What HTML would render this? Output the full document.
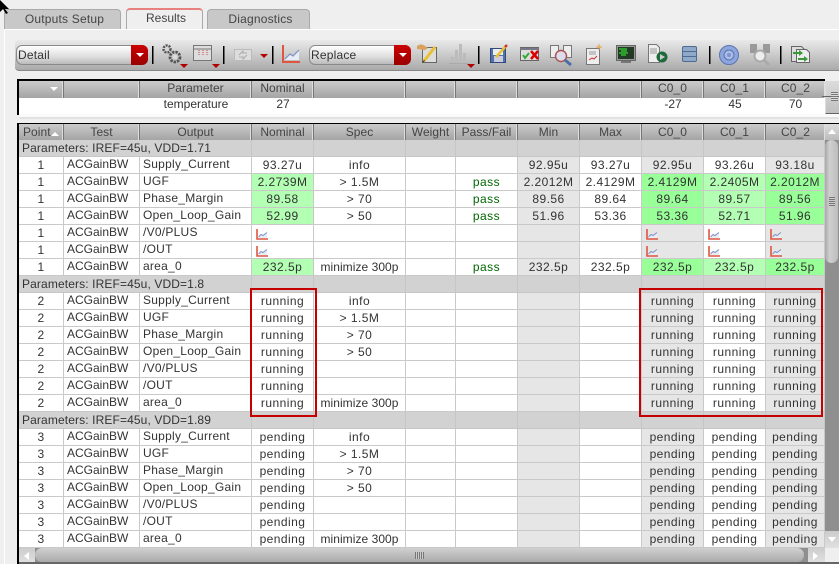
<!DOCTYPE html>
<html><head><meta charset="utf-8"><style>
html,body{margin:0;padding:0;width:839px;height:564px;overflow:hidden;background:#efefef;font-family:"Liberation Sans",sans-serif;font-size:12px;color:#333}
div{position:absolute;box-sizing:border-box}
.tab{top:9px;height:20px;background:#c8c8c8;border:1px solid #a9a9a9;border-bottom:0;border-radius:4px 4px 0 0;text-align:center;line-height:19px;letter-spacing:.2px;color:#444}
.combo{top:45px;height:20px;border:1px solid #8a8a8a;border-radius:6px;background:linear-gradient(#fff,#ddd 60%,#bbb);line-height:18px;padding-left:1px;letter-spacing:.2px}
.combo i{position:absolute;right:-1px;top:-1px;width:17px;height:20px;background:linear-gradient(#c00,#900);border-radius:0 6px 6px 0}
.combo i:after{content:"";position:absolute;left:5px;top:8px;border:4px solid transparent;border-top:4px solid #fff;border-bottom:0}
.hd{background:linear-gradient(#cbcbcb,#a4a4a4);height:17px;text-align:center;line-height:15px;letter-spacing:.05px;color:#444;border-right:1px solid #777;box-shadow:inset -1px 0 0 #ddd}
.v{text-align:center;letter-spacing:0;line-height:14px}
table{border-collapse:separate;border-spacing:0;table-layout:fixed;position:absolute;left:19px;top:140px;width:806px;background:#fff}
td{height:17px;padding:0;border-right:1px solid #c9c9c9;border-bottom:1px solid #c9c9c9;box-sizing:border-box;text-align:center;letter-spacing:.45px;line-height:16px;white-space:nowrap;overflow:hidden;font-size:12px}
td.l{text-align:left;padding-left:3px;line-height:14px;vertical-align:top;letter-spacing:.25px}
td.t{text-align:left;padding-left:3px;line-height:14px;vertical-align:top;letter-spacing:0}
td.m{letter-spacing:.05px}
td.p{background:#d2d2d2;text-align:left;padding-left:3px;overflow:visible;line-height:15px;border-color:#c6c6c6;letter-spacing:.12px}
td.q{background:#d2d2d2;border-color:#c6c6c6}
.g{background:#b3ffb3}.h{background:#99ff99}.y{color:#060}
.gy{background:#e6e6e6}
td svg{display:block;margin:2px 0 0 4px}
.box{border:2px solid #c40000}
</style></head><body>
<div style="left:4px;top:29px;width:835px;height:1px;background:#fff"></div>
<div style="left:4px;top:29px;width:1px;height:535px;background:#fff"></div>
<div class="tab" style="left:4px;width:117px;padding-left:4px">Outputs Setup</div>
<div class="tab" style="left:126px;top:8px;width:77px;height:21px;background:#efefef;border-top:2px solid #e98080;line-height:17px;letter-spacing:0;padding-left:3px">Results</div>
<div class="tab" style="left:207px;width:103px;padding-left:4px">Diagnostics</div>

<div style="left:15px;top:40px;width:824px;height:31px;background:linear-gradient(#e9e9e9,#c4c4c4 60%,#aaa);border-bottom:1px solid #888;border-radius:4px 0 0 4px"></div>
<div class="combo" style="left:16px;width:132px">Detail<i></i></div>
<div class="combo" style="left:309px;width:102px">Replace<i></i></div>

<svg width="839" height="564" style="position:absolute;left:0;top:0;z-index:3" viewBox="0 0 839 564">
<defs><symbol id="ch" viewBox="0 0 18 18"><path d="M1 0V17H18" fill="none" stroke="#e0553f" stroke-width="2"/><path d="M3 14L8 9L11 11L17 5V15H3Z" fill="#e8ecf5"/><path d="M3 14L8 9L11 11L17 5" fill="none" stroke="#7d8fc4" stroke-width="1.2"/></symbol>
<symbol id="cs" viewBox="0 0 12 11"><path d="M1 0V10H12" fill="none" stroke="#e0553f" stroke-width="1.6"/><path d="M2.500 8L5 5.500L7 6.500L11 3.500V9H2.500Z" fill="#e8ecf5"/><path d="M2.500 8L5 5.500L7 6.500L11 3.500" fill="none" stroke="#7d8fc4"/></symbol></defs>
<path d="M0 0L9 9H5L8 13L6 14L3 9L0 12Z" fill="#000"/>
<g fill="#000"><rect x="152" y="46" width="1.5" height="18"/><rect x="223" y="46" width="1.5" height="18"/><rect x="272" y="46" width="1.5" height="18"/><rect x="478" y="46" width="1.5" height="18"/><rect x="709" y="46" width="1.5" height="18"/><rect x="780" y="46" width="1.5" height="18"/></g>
<g fill="#b00000"><path d="M180 64h8l-4 4z"/><path d="M212 64h8l-4 4z"/><path d="M260 54h8l-4 4z"/><path d="M467 64h8l-4 4z"/></g>
<g fill="none" stroke="#555"><circle cx="167" cy="49" r="3.5" stroke-width="2.4" stroke-dasharray="2 1"/><circle cx="175" cy="57" r="5" stroke-width="2.8" stroke-dasharray="2.4 1"/></g><circle cx="175" cy="57" r="2" fill="#ddd"/>
<rect x="193.500" y="45.500" width="18" height="15" fill="#ddd" stroke="#777"/><path d="M194 49h17" stroke="#777"/><path d="M199 50v5M203 50v5M207 50v5" stroke="#c44" stroke-dasharray="1 1"/>
<g fill="#ddd" stroke="#bbb"><rect x="234.500" y="49.500" width="17" height="11"/></g><path d="M239 55l4-4v2h4M247 55l-4 4v-2h-4" stroke="#aaa" fill="none"/>
<use href="#ch" x="282" y="45" width="18" height="18"/>
<rect x="422.500" y="47.500" width="14" height="15" fill="#ddd" stroke="#666"/><path d="M417 46q4-3 8 0l3 2-3 2-8-1z" fill="#d9a15c"/><path d="M424 61L435 47" stroke="#e8c030" stroke-width="3"/><path d="M422 63l2-3 1 1z" fill="#222"/>
<path d="M449 63.500h20" stroke="#aaa"/><g fill="#bbb"><rect x="451" y="57" width="3" height="6"/><rect x="455" y="50" width="3" height="13"/><rect x="459" y="44" width="3" height="19"/><rect x="463" y="53" width="3" height="10"/></g>
<rect x="490.500" y="48.500" width="15" height="14" fill="#5572a8" stroke="#2f4a80"/><rect x="494" y="56" width="9" height="6" fill="#ccd"/><rect x="493" y="49" width="10" height="6" fill="#eee"/><path d="M496 57L506 46" stroke="#e8c030" stroke-width="2.500"/><path d="M505 47l2-2" stroke="#c33" stroke-width="2.500"/>
<rect x="520.500" y="47.500" width="18" height="13" fill="#ddd" stroke="#666"/><path d="M520 48h19v2h-19z" fill="#778"/><path d="M523 55l2 3 4-5" stroke="#3a3" stroke-width="2" fill="none"/><path d="M531 51l7 8M538 51l-7 8" stroke="#d00" stroke-width="2.500"/>
<path d="M550.500 45.500h8v12h-8zM563.500 45.500h8v12h-8z" fill="#eee" stroke="#777"/><circle cx="561" cy="56" r="5.500" fill="#dde" stroke="#a55" stroke-width="1.500"/><path d="M565 60l6 5" stroke="#4a6fa5" stroke-width="3"/>
<rect x="586.500" y="48.500" width="13" height="16" fill="#eee" stroke="#777"/><path d="M589 60l3-2 2 1 3-3" stroke="#c33" fill="none"/><path d="M589 52h7M589 54h7" stroke="#999"/><path d="M599 44v6M596 47h6" stroke="#e0a040"/>
<rect x="616.500" y="45.500" width="19" height="15" fill="#999" stroke="#666"/><rect x="618" y="47" width="16" height="12" fill="#243a24"/><path d="M619 49h8M621 51h6M619 53h9M621 55h5" stroke="#3f3"/><rect x="621" y="61" width="10" height="2" fill="#777"/>
<path d="M648.500 44.500h8l3 3v15h-11z" fill="#eee" stroke="#777"/><path d="M650 49h7M650 51h7M650 53h7" stroke="#999"/><circle cx="662" cy="57" r="5.500" fill="#1f6a3a"/><path d="M660 54l5 3-5 3z" fill="#ccc"/>
<rect x="682.500" y="46.500" width="14" height="15" rx="1.500" fill="#8fa9c8" stroke="#4d6a90"/><path d="M683 51.500h13M683 56.500h13" stroke="#4d6a90"/>
<circle cx="729" cy="55" r="9.500" fill="#8ea6de" stroke="#5a74b0"/><circle cx="729" cy="55" r="5" fill="#a9bbe6" stroke="#5a74b0"/><circle cx="729" cy="55" r="2" fill="#7d95cc"/>
<path d="M750 44h7v9h-7zM763 44h7v9h-7z" fill="#999"/><circle cx="760" cy="56" r="5.500" fill="#eee" stroke="#aaa" stroke-width="2"/><path d="M764 60l5 5" stroke="#aaa" stroke-width="3"/>
<path d="M791.500 46.500h10l3 3v12h-13z" fill="#ddd" stroke="#666"/><path d="M796.500 49.500h10l3 3v10h-13z" fill="#eee" stroke="#666"/><path d="M793 52h6v-2l4 3-4 3v-2h-6z" fill="#3a9a3a"/><path d="M798 58h6v-2l4 3-4 3v-2h-6z" fill="#3a9a3a"/>
</svg>

<!-- upper table -->
<div style="left:17px;top:79px;width:808px;height:36px;background:#fff;border-left:2px solid #000;border-top:2px solid #000"></div>
<div class="hd" style="left:19px;top:81px;width:45px"></div>
<div style="left:50px;top:87px;border:4px solid transparent;border-top:4px solid #fff;border-bottom:0"></div>
<div class="hd" style="left:64px;top:81px;width:76px"></div>
<div class="hd" style="left:140px;top:81px;width:112px">Parameter</div>
<div class="hd" style="left:252px;top:81px;width:62px">Nominal</div>
<div class="hd" style="left:314px;top:81px;width:92px"></div>
<div class="hd" style="left:406px;top:81px;width:50px"></div>
<div class="hd" style="left:456px;top:81px;width:62px"></div>
<div class="hd" style="left:518px;top:81px;width:62px"></div>
<div class="hd" style="left:580px;top:81px;width:62px"></div>
<div class="hd" style="left:642px;top:81px;width:62px">C0_0</div>
<div class="hd" style="left:704px;top:81px;width:62px">C0_1</div>
<div class="hd" style="left:766px;top:81px;width:59px;border-right:0">C0_2</div>
<div class="v" style="left:140px;top:97px;width:112px">temperature</div>
<div class="v" style="left:252px;top:97px;width:62px">27</div>
<div class="v" style="left:642px;top:97px;width:62px">-27</div>
<div class="v" style="left:704px;top:97px;width:62px">45</div>
<div class="v" style="left:766px;top:97px;width:59px">70</div>
<div style="left:825px;top:81px;width:14px;height:33px;background:linear-gradient(#dcdcdc,#c0c0c0);border-bottom:1px solid #666;border-left:1px solid #ddd"></div>
<div style="left:822px;top:96px;width:17px;height:1px;background:#666"></div>
<div style="left:831px;top:92px;width:7px;height:9px;background:repeating-linear-gradient(#777 0 1px,#ddd 1px 2px)"></div>
<div style="left:19px;top:114px;width:820px;height:3px;background:#fafafa"></div>
<div style="left:19px;top:117px;width:820px;height:2px;background:#e2e2e2"></div>

<!-- main table -->
<div style="left:17px;top:123px;width:822px;height:2px;background:#000"></div>
<div style="left:17px;top:123px;width:2px;height:441px;background:#000"></div>
<div class="hd" style="left:19px;top:124px;width:45px;height:16px;text-align:left;padding-left:4px;padding-top:1px">Point</div>
<div style="left:51px;top:132px;border:3px solid transparent;border-bottom:4px solid #fff;border-top:0;border-left-width:4px;border-right-width:4px"></div>
<div class="hd" style="left:64px;top:124px;width:76px;height:16px;padding-top:1px">Test</div>
<div class="hd" style="left:140px;top:124px;width:112px;height:16px;padding-top:1px">Output</div>
<div class="hd" style="left:252px;top:124px;width:62px;height:16px;padding-top:1px">Nominal</div>
<div class="hd" style="left:314px;top:124px;width:92px;height:16px;padding-top:1px">Spec</div>
<div class="hd" style="left:406px;top:124px;width:50px;height:16px;padding-top:1px">Weight</div>
<div class="hd" style="left:456px;top:124px;width:62px;height:16px;padding-top:1px">Pass/Fail</div>
<div class="hd" style="left:518px;top:124px;width:62px;height:16px;padding-top:1px">Min</div>
<div class="hd" style="left:580px;top:124px;width:62px;height:16px;padding-top:1px">Max</div>
<div class="hd" style="left:642px;top:124px;width:62px;height:16px;padding-top:1px">C0_0</div>
<div class="hd" style="left:704px;top:124px;width:62px;height:16px;padding-top:1px">C0_1</div>
<div class="hd" style="left:766px;top:124px;width:59px;height:16px;border-right:0;padding-top:1px">C0_2</div>

<table>
<colgroup><col style="width:45px"><col style="width:76px"><col style="width:112px"><col style="width:62px"><col style="width:92px"><col style="width:50px"><col style="width:62px"><col class="gy" style="width:62px"><col style="width:62px"><col class="gy" style="width:62px"><col style="width:62px"><col class="gy" style="width:59px"></colgroup>
<tr><td class="p" colspan="3">Parameters: IREF=45u, VDD=1.71<td class="q"><td class="q"><td class="q"><td class="q"><td class="q"><td class="q"><td class="q"><td class="q"><td class="q">
<tr><td>1<td class="t">ACGainBW<td class="l">Supply_Current<td>93.27u<td>info<td><td><td>92.95u<td>93.27u<td>92.95u<td>93.26u<td>93.18u
<tr><td>1<td class="t">ACGainBW<td class="l">UGF<td class="g">2.2739M<td>&gt; 1.5M<td><td class="y">pass<td>2.2012M<td>2.4129M<td class="h">2.4129M<td class="g">2.2405M<td class="h">2.2012M
<tr><td>1<td class="t">ACGainBW<td class="l">Phase_Margin<td class="g">89.58<td>&gt; 70<td><td class="y">pass<td>89.56<td>89.64<td class="h">89.64<td class="g">89.57<td class="h">89.56
<tr><td>1<td class="t">ACGainBW<td class="l">Open_Loop_Gain<td class="g">52.99<td>&gt; 50<td><td class="y">pass<td>51.96<td>53.36<td class="h">53.36<td class="g">52.71<td class="h">51.96
<tr><td>1<td class="t">ACGainBW<td class="l">/V0/PLUS<td><svg width="12" height="11"><use href="#cs" width="12" height="11"/></svg><td><td><td><td><td><td><svg width="12" height="11"><use href="#cs" width="12" height="11"/></svg><td><svg width="12" height="11"><use href="#cs" width="12" height="11"/></svg><td><svg width="12" height="11"><use href="#cs" width="12" height="11"/></svg>
<tr><td>1<td class="t">ACGainBW<td class="l">/OUT<td><svg width="12" height="11"><use href="#cs" width="12" height="11"/></svg><td><td><td><td><td><td><svg width="12" height="11"><use href="#cs" width="12" height="11"/></svg><td><svg width="12" height="11"><use href="#cs" width="12" height="11"/></svg><td><svg width="12" height="11"><use href="#cs" width="12" height="11"/></svg>
<tr><td>1<td class="t">ACGainBW<td class="l">area_0<td class="g">232.5p<td class="m">minimize 300p<td><td class="y">pass<td>232.5p<td>232.5p<td class="h">232.5p<td class="g">232.5p<td class="h">232.5p
<tr><td class="p" colspan="3">Parameters: IREF=45u, VDD=1.8<td class="q"><td class="q"><td class="q"><td class="q"><td class="q"><td class="q"><td class="q"><td class="q"><td class="q">
<tr><td>2<td class="t">ACGainBW<td class="l">Supply_Current<td>running<td>info<td><td><td><td><td>running<td>running<td>running
<tr><td>2<td class="t">ACGainBW<td class="l">UGF<td>running<td>&gt; 1.5M<td><td><td><td><td>running<td>running<td>running
<tr><td>2<td class="t">ACGainBW<td class="l">Phase_Margin<td>running<td>&gt; 70<td><td><td><td><td>running<td>running<td>running
<tr><td>2<td class="t">ACGainBW<td class="l">Open_Loop_Gain<td>running<td>&gt; 50<td><td><td><td><td>running<td>running<td>running
<tr><td>2<td class="t">ACGainBW<td class="l">/V0/PLUS<td>running<td><td><td><td><td><td>running<td>running<td>running
<tr><td>2<td class="t">ACGainBW<td class="l">/OUT<td>running<td><td><td><td><td><td>running<td>running<td>running
<tr><td>2<td class="t">ACGainBW<td class="l">area_0<td>running<td class="m">minimize 300p<td><td><td><td><td>running<td>running<td>running
<tr><td class="p" colspan="3">Parameters: IREF=45u, VDD=1.89<td class="q"><td class="q"><td class="q"><td class="q"><td class="q"><td class="q"><td class="q"><td class="q"><td class="q">
<tr><td>3<td class="t">ACGainBW<td class="l">Supply_Current<td>pending<td>info<td><td><td><td><td>pending<td>pending<td>pending
<tr><td>3<td class="t">ACGainBW<td class="l">UGF<td>pending<td>&gt; 1.5M<td><td><td><td><td>pending<td>pending<td>pending
<tr><td>3<td class="t">ACGainBW<td class="l">Phase_Margin<td>pending<td>&gt; 70<td><td><td><td><td>pending<td>pending<td>pending
<tr><td>3<td class="t">ACGainBW<td class="l">Open_Loop_Gain<td>pending<td>&gt; 50<td><td><td><td><td>pending<td>pending<td>pending
<tr><td>3<td class="t">ACGainBW<td class="l">/V0/PLUS<td>pending<td><td><td><td><td><td>pending<td>pending<td>pending
<tr><td>3<td class="t">ACGainBW<td class="l">/OUT<td>pending<td><td><td><td><td><td>pending<td>pending<td>pending
<tr><td>3<td class="t">ACGainBW<td class="l">area_0<td>pending<td class="m">minimize 300p<td><td><td><td><td>pending<td>pending<td>pending
</table>

<!-- vertical scrollbar -->
<div style="left:825px;top:124px;width:14px;height:424px;background:#8f8f8f"></div>
<div style="left:825px;top:124px;width:14px;height:16px;background:linear-gradient(#ddd,#bbb)"></div>
<div style="left:828px;top:129px;border:4px solid transparent;border-bottom:5px solid #fff;border-top:0"></div>
<div style="left:825px;top:140px;width:13px;height:123px;background:linear-gradient(90deg,#a8a8a8,#cfcfcf 35%,#bdbdbd);border-radius:7px"></div>
<div style="left:829px;top:197px;width:6px;height:9px;background:repeating-linear-gradient(#777 0 1px,#ccc 1px 2px)"></div>
<div style="left:825px;top:531px;width:14px;height:17px;background:linear-gradient(#ccc,#e0e0e0)"></div>
<div style="left:828px;top:537px;border:4px solid transparent;border-top:5px solid #fff;border-bottom:0"></div>
<!-- horizontal scrollbar -->
<div style="left:19px;top:548px;width:806px;height:15px;background:#8f8f8f"></div>
<div style="left:19px;top:548px;width:16px;height:15px;background:linear-gradient(#ccc,#e0e0e0)"></div>
<div style="left:24px;top:552px;border:4px solid transparent;border-right:5px solid #fff;border-left:0"></div>
<div style="left:35px;top:548px;width:769px;height:14px;background:linear-gradient(#d0d0d0,#aaa);border-radius:7px"></div>
<div style="left:415px;top:552px;width:9px;height:7px;background:repeating-linear-gradient(90deg,#777 0 1px,#ccc 1px 2px)"></div>
<div style="left:808px;top:548px;width:17px;height:15px;background:linear-gradient(#ccc,#e0e0e0)"></div>
<div style="left:813px;top:552px;border:4px solid transparent;border-left:5px solid #fff;border-right:0"></div>
<div style="left:19px;top:562px;width:820px;height:2px;background:#666"></div>

<div class="box" style="left:250px;top:288px;width:67px;height:129px"></div>
<div class="box" style="left:639px;top:288px;width:184px;height:129px"></div>
</body></html>
